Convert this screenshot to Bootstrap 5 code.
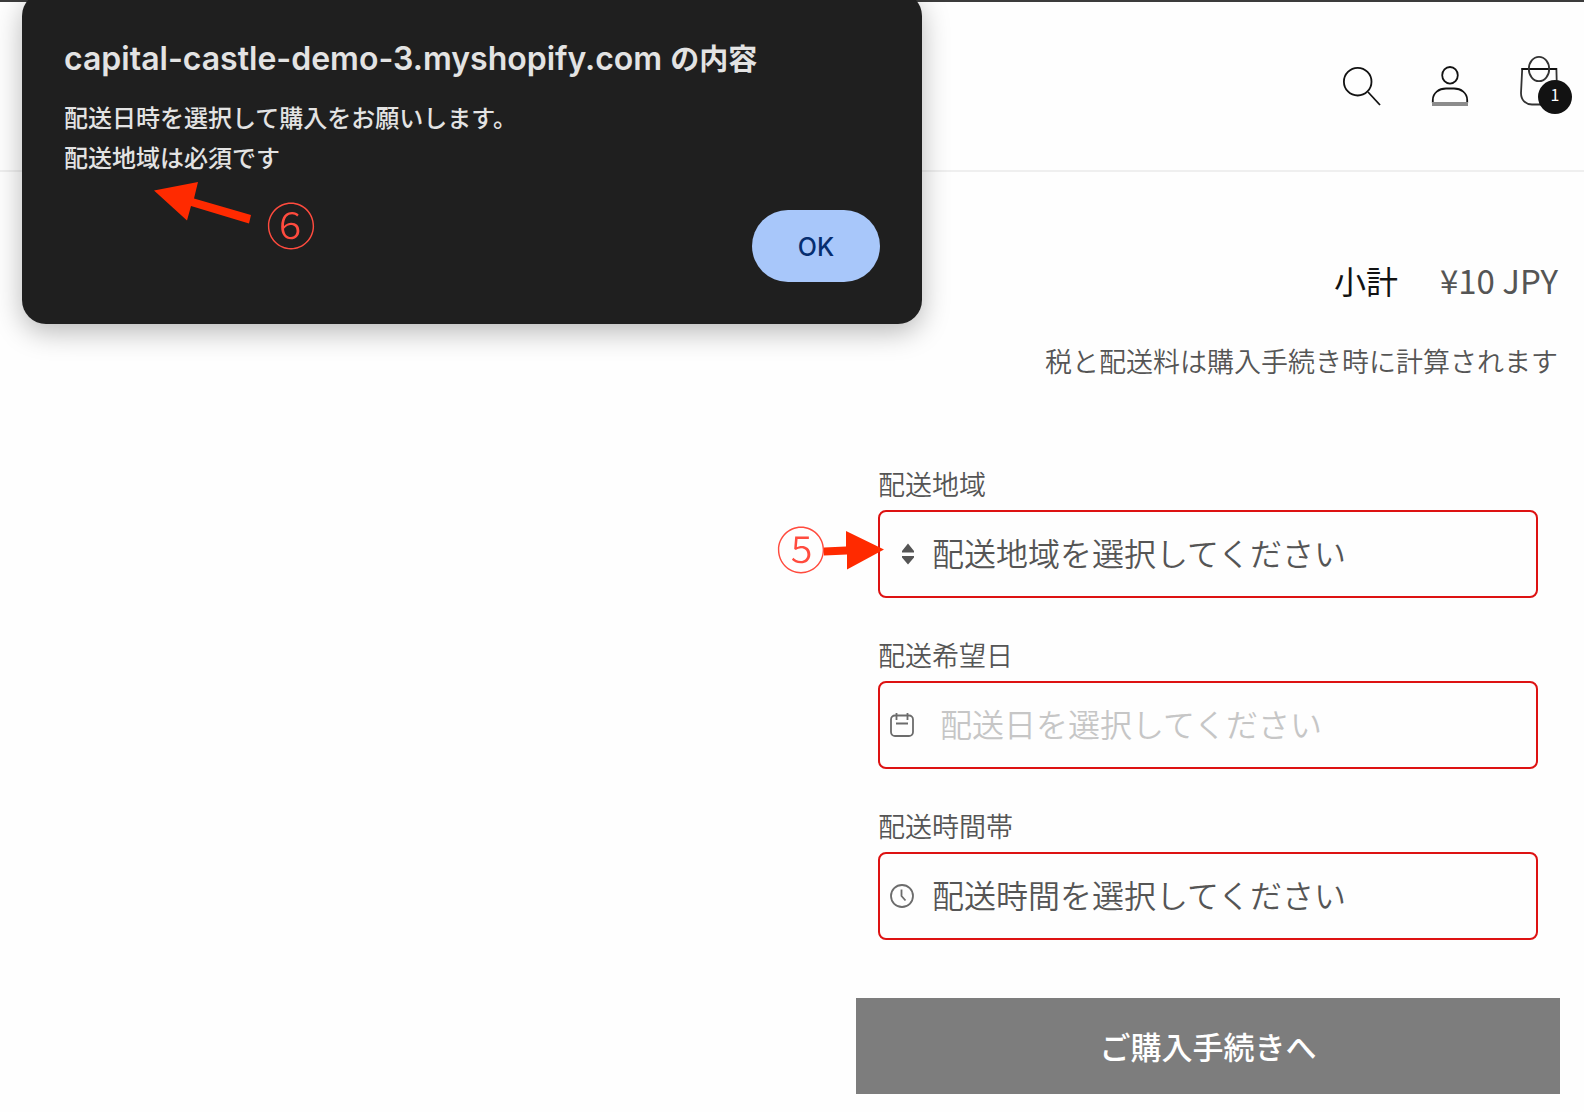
<!DOCTYPE html>
<html lang="ja">
<head>
<meta charset="utf-8">
<meta name="viewport" content="width=device-width, initial-scale=1">
<title>カート</title>
<link href="https://cdn.jsdelivr.net/npm/bootstrap@5.3.0/dist/css/bootstrap.min.css" rel="stylesheet">
<style>
  body { font-family: "Noto Sans CJK JP", sans-serif; color: #555; background: #fefefe; }
  .shop-header { border-top: 2px solid #3c3c3c; border-bottom: 2px solid #efefef; padding: 40px 2px; }
  .icon-btn { width: 88px; height: 88px; color: #121212; }
  .icon-btn svg { display: block; }
  .cart-count { left: 44px; top: 38px; width: 34px; height: 34px; background: #121212; font-size: 16px; line-height: 28px; }
  .cart-area { padding: 84px 24px 18px; }
  .cart-footer { width: 100%; max-width: 704px; }
  .cart-totals { padding-right: 2px; }
  .subtotal { font-size: 32px; line-height: 48px; gap: 42px; }
  .subtotal-price { font-size: 33px; }
  .subtotal-title { color: #121212; }
  .tax-note { font-size: 27px; line-height: 40px; margin-top: 37px; font-weight: 350; }
  .delivery { margin-top: 83px; padding: 0 22px; gap: 37px; font-weight: 350; }
  .delivery label { font-size: 27px; line-height: 40px; margin-bottom: 6px; }
  .delivery .field { height: 88px; border: 2px solid #dd1212; border-radius: 8px; font-size: 32px; font-weight: 350; color: #555; background: #fefefe; padding: 0 20px 4px 52px; }
  .delivery input.field { padding-left: 60px; }
  .delivery .field::placeholder { color: #c6c6c6; opacity: 1; }
  .field-icon { left: 12px; top: 32px; pointer-events: none; }
  .sort-icon { left: 18px; }
  .checkout { margin-top: 58px; height: 96px; background: #7d7d7d; color: #fff; border-radius: 0; font-size: 31px; font-weight: 500; }
  .checkout:hover { background: #6d6d6d; color: #fff; }
  .alert-box { left: 22px; top: -8px; width: 900px; max-width: calc(100% - 44px); padding: 47px 42px 42px; border-radius: 24px; background: #1f1f1f; color: #e3e3e3; box-shadow: 0 8px 28px rgba(0,0,0,.28); z-index: 10; }
  .alert-title { font-family: Inter, "Noto Sans CJK JP", sans-serif; font-size: 32px; font-weight: 600; line-height: 40px; margin-bottom: 18px; }
  .alert-title span { font-size: 29px; line-height: 1; }
  .alert-text { font-size: 24px; font-weight: 500; line-height: 40px; margin-bottom: 33px; }
  .ok-btn { width: 128px; height: 72px; padding: 4px 0 0; background: #a8c7fa; color: #062e6f; font-family: Inter, sans-serif; font-size: 25px; font-weight: 500; }
  .step-mark { color: #ff4b3e; font-size: 50px; font-weight: 300; line-height: 56px; }
  .step-six { left: 244px; top: 203px; }
  .arrow-six { left: 132px; top: 190px; }
  .step-five { left: -102px; top: 55px; }
  .arrow-five { left: -56px; top: 67px; }
</style>
</head>
<body>
<header class="shop-header d-flex justify-content-end">
  <button class="icon-btn btn p-0 border-0" type="button" aria-label="検索">
    <svg width="88" height="88" viewBox="0 0 88 88" fill="none" stroke="currentColor" stroke-width="1.8"><circle cx="39.7" cy="39.7" r="13.8"/><path d="M50 50 62 63"/></svg>
  </button>
  <a class="icon-btn" href="#" aria-label="ログイン">
    <svg width="88" height="88" viewBox="0 0 88 88" fill="none" stroke="currentColor" stroke-width="1.8"><ellipse cx="44" cy="33.3" rx="7.8" ry="8.3"/><path d="M26.8 61V58C26.8 51 33 46.5 40 46.5H48C55 46.5 61.2 51 61.2 58V61"/><path d="M26 62H62" stroke="#8c8c8c" stroke-width="4"/></svg>
  </a>
  <a class="icon-btn position-relative" href="#" aria-label="カート">
    <svg width="88" height="88" viewBox="0 0 88 88" fill="none" stroke="currentColor" stroke-width="1.8"><path d="M28.2 27H62.4L63 51C63 58 58.5 62.5 52 62.5H38C31.5 62.5 27 58 27 51Z" stroke="#333"/><path d="M27.5 27H63"/><ellipse cx="45" cy="27" rx="10.2" ry="12.2" stroke="#333"/></svg>
    <span class="cart-count position-absolute rounded-circle text-white text-center">1</span>
  </a>
</header>

<main class="cart-area d-flex justify-content-end">
  <div class="cart-footer">
    <div class="cart-totals">
      <div class="subtotal d-flex justify-content-end">
        <span class="subtotal-title">小計</span>
        <span class="subtotal-price">¥10 JPY</span>
      </div>
      <p class="tax-note text-end mb-0">税と配送料は購入手続き時に計算されます</p>
    </div>

    <form class="delivery d-flex flex-column" id="delivery-form">
      <div class="position-relative">
        <label class="d-block" for="area">配送地域</label>
        <div class="position-relative">
          <select class="field form-select" id="area"><option>配送地域を選択してください</option></select>
          <svg class="field-icon sort-icon position-absolute" width="24" height="24" viewBox="0 0 24 24" fill="#555"><path d="M12 1.5 18 9V10.5H6V9ZM6 14H18V15.5L12 22.5 6 15.5Z"/></svg>
        </div>
        <span class="step-mark step-five position-absolute">⑤</span>
        <svg class="arrow-five position-absolute" width="64" height="40" viewBox="0 0 64 40" fill="#ff2a00"><path d="M2 16.5 24 15.5V0L62 18.5 25 38.5V23.5L2 24.5Z"/></svg>
      </div>
      <div>
        <label class="d-block" for="date">配送希望日</label>
        <div class="position-relative">
          <input class="field form-control" id="date" type="text" placeholder="配送日を選択してください">
          <svg class="field-icon position-absolute" width="24" height="24" viewBox="0 0 24 24" fill="none" stroke="#6c6c6c" stroke-width="1.8"><rect x="1" y="2.5" width="22" height="20.5" rx="4"/><path d="M6.5 0V7M17.5 0V7M6 10.5H18"/></svg>
        </div>
      </div>
      <div>
        <label class="d-block" for="time">配送時間帯</label>
        <div class="position-relative">
          <select class="field form-select" id="time"><option>配送時間を選択してください</option></select>
          <svg class="field-icon position-absolute" width="24" height="24" viewBox="0 0 24 24" fill="none" stroke="#6c6c6c" stroke-width="1.8"><circle cx="12" cy="12" r="11"/><path d="M11.5 5.5V12L15.5 16.5"/></svg>
        </div>
      </div>
    </form>
    <button class="checkout btn w-100 border-0" type="submit" form="delivery-form">ご購入手続きへ</button>
  </div>
</main>

<div class="alert-box position-absolute" role="alertdialog" aria-labelledby="alert-title">
  <h1 class="alert-title" id="alert-title">capital-castle-demo-3.myshopify.com <span>の内容</span></h1>
  <p class="alert-text">配送日時を選択して購入をお願いします。<br>配送地域は必須です</p>
  <div class="d-flex justify-content-end">
    <button class="ok-btn btn rounded-pill border-0" type="button">OK</button>
  </div>
  <svg class="arrow-six position-absolute" width="98" height="42" viewBox="0 0 98 42" fill="#ff2a00"><path d="M0 8.5 44 0 40 16.5 97 33 95 41.5 37 24 33 38.5Z"/></svg>
  <span class="step-mark step-six position-absolute">⑥</span>
</div>
<script src="https://cdn.jsdelivr.net/npm/bootstrap@5.3.0/dist/js/bootstrap.bundle.min.js"></script>
</body>
</html>
